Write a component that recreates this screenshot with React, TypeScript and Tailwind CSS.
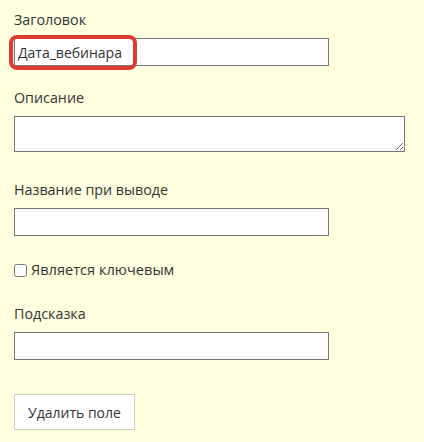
import React from "react";

function Field({ label, children }: { label: string; children: React.ReactNode }) {
  return (
    <div className="flex flex-col">
      <label className="h-5 text-[14.3px] leading-5 text-[#333]">{label}</label>
      <div className="mt-2">{children}</div>
    </div>
  );
}

export default function App() {
  return (
    <div
      className="flex min-h-[442px] w-[424px] flex-col bg-[#ffffe0] px-[14px] pt-[10px]"
      style={{ fontFamily: '"Open Sans", "Liberation Sans", sans-serif' }}
    >
      <Field label="Заголовок">
        <div className="relative">
          <input
            defaultValue="Дата_вебинара"
            className="h-[28px] w-[315px] border border-[#767676] bg-white px-[3px] text-[14px] text-[#333] outline-none"
          />
          <div className="pointer-events-none absolute left-[-5px] top-[-3px] h-[35px] w-[128px] rounded-[8px] border-[4px] border-[#e0392f]" />
        </div>
      </Field>

      <div className="mt-[22px]">
        <Field label="Описание">
          <textarea className="block h-[36px] w-[391px] resize-y border border-[#767676] bg-white outline-none" />
        </Field>
      </div>

      <div className="mt-[28px]">
        <Field label="Название при выводе">
          <input className="h-[28px] w-[315px] border border-[#767676] bg-white px-[4px] text-[14px] outline-none" />
        </Field>
      </div>

      <label className="mt-[24px] flex h-5 items-center gap-[4px] text-[14.6px] text-[#333]">
        <input type="checkbox" className="m-0 h-[13px] w-[13px]" />
        Является ключевым
      </label>

      <div className="mt-[24px]">
        <Field label="Подсказка">
          <input className="h-[28px] w-[315px] border border-[#767676] bg-white px-[4px] text-[14px] outline-none" />
        </Field>
      </div>

      <button className="mt-[34px] h-[36px] w-[121px] border border-[#cccccc] bg-white text-[14px] text-[#333]">
        Удалить поле
      </button>
    </div>
  );
}
